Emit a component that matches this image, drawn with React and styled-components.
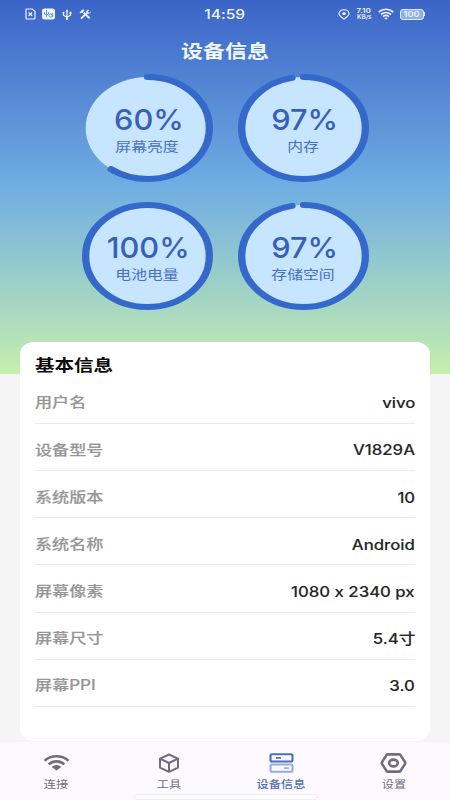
import React from 'react';
import styled, { createGlobalStyle } from 'styled-components';

const royal = '#3568cb';
const ice = '#c8e5ff';
const slate = '#6f6d7c';
const wide = 1.22;

const GlobalStyle = createGlobalStyle`
	* {
		box-sizing: border-box;
	}

	body {
		margin: 0;
		background: #f5f5f5;
		font-family: Inter, "Noto Sans CJK SC", sans-serif;
		font-feature-settings: "calt" 0;
	}
`;

const Screen = styled.div`
	display: flex;
	flex-direction: column;

	width: 450px;
	height: 800px;
	overflow: hidden;

	background: linear-gradient(#3b64c8 0, #70aee2 187px, #c5efae 374px, #f5f5f5 374px);
`;

// Every label is set in extended letters
const Text = styled.span`
	display: inline-block;

	font-size: ${props => props.$size}px;
	font-weight: ${props => props.$weight || 400};
	line-height: ${props => props.$line || 1.2};
	color: ${props => props.$color};
	white-space: nowrap;
	transform: scaleX(${props => props.$stretch || wide});
	transform-origin: ${props => props.$origin || 'center'};
	-webkit-text-stroke: ${props => props.$stroke || 0}px currentColor;
`;

const StatusBar = styled.header`
	display: grid;
	grid-template-columns: 1fr auto 1fr;
	align-items: center;

	height: 29px;
	padding: 0 25px 0 25px;

	color: #eaf4ff;
`;

const StatusGroup = styled.div`
	display: flex;
	align-items: center;
	justify-content: ${props => props.$end ? 'flex-end' : 'flex-start'};
	gap: 6px;

	svg {
		display: block;
	}
`;

const Speed = styled.div`
	display: flex;
	flex-direction: column;
	align-items: center;
	gap: 1px;

	width: 15px;
	margin-left: 1px;
`;

const Battery = styled.div`
	display: flex;
	align-items: center;

	&::after {
		content: '';
		width: 1.5px;
		height: 4px;
		background: #dcebff;
	}
`;

const BatteryBody = styled.div`
	display: flex;
	align-items: center;
	justify-content: center;

	width: 24px;
	height: 11px;

	border: 1px solid #dcebff;
	border-radius: 3px;
	background: #8fafe4;
`;

const Title = styled.h1`
	display: flex;
	justify-content: center;

	height: 45px;
	margin: 0;
	padding-top: 12px;
`;

const Gauges = styled.section`
	display: grid;
	grid-template-columns: repeat(2, 131px);
	justify-content: center;
	gap: 20px 25px;

	margin-bottom: 32px;
`;

const GaugeBox = styled.div`
	display: grid;
	place-items: center;

	height: 108px;

	> * {
		grid-area: 1 / 1;
	}
`;

const GaugeText = styled.div`
	display: flex;
	flex-direction: column;
	align-items: center;

	padding: 2px 0 0 1px;
`;

const GaugeValue = styled(Text)`
	padding-left: 2px;
`;

const Card = styled.section`
	height: 400.5px;
	margin: 0 20px;
	padding: 14px 15px 0;

	border-radius: 14px / 12px;
	background: #fff;
`;

const CardTitle = styled.h2`
	display: flex;
	align-items: flex-start;

	height: 21px;
	margin: 0;
`;

const Row = styled.div`
	display: flex;
	align-items: center;
	justify-content: space-between;

	height: 47.17px;
	padding-top: 6px;

	border-bottom: 1px solid #ebebeb;
`;

const TabBar = styled.nav`
	display: grid;
	grid-template-columns: repeat(4, 1fr);

	height: 53px;

	border-top: 1px solid #f4f2f5;
	background: #fdfaff;
`;

const Tab = styled.div`
	display: flex;
	flex-direction: column;
	align-items: center;
	gap: 4px;

	padding-top: 11px;

	svg {
		display: block;
	}
`;

const HomeIndicator = styled.div`
	flex: 1;

	padding-left: 134px;
	background: #fdfaff;

	&::before {
		content: '';
		display: block;
		width: 182px;
		height: 4px;
		border: 1px solid #efedf0;
		border-radius: 3px;
		background: #fff;
	}
`;

const UsbPaths = () => (
	<g fill="none" stroke="currentColor" strokeWidth="1.3">
		<path d="M6 1.5v8.5M2.5 4v2.2L6 8.2l3.5-2V4" />
		<path d="M6 .2 7.600 2.6H4.400Z" fill="currentColor" stroke="none" />
		<circle cx="2.5" cy="3.8" r="1.1" fill="currentColor" stroke="none" />
		<path d="M8.5 2.8h2v2h-2z" fill="currentColor" stroke="none" />
		<circle cx="6" cy="9.7" r="1.2" fill="currentColor" stroke="none" />
	</g>
);

const SimIcon = () => (
	<svg width="11" height="12" viewBox="0 0 11 12" fill="none" stroke="currentColor">
		<path d="M2 1h5.2L10 3.4V10a1 1 0 0 1-1 1H2a1 1 0 0 1-1-1V2a1 1 0 0 1 1-1Z" strokeWidth="1.2" />
		<path d="m3.6 4.6 3.6 3.2M7.2 4.6 3.6 7.8" strokeWidth="1.3" />
	</svg>
);

const UsbBadge = () => (
	<svg width="13" height="12" viewBox="0 0 13 12">
		<rect y=".5" width="13" height="11" rx="2.5" fill="#eef6ff" />
		<g fill="none" stroke="#6b8fd8" strokeWidth="1">
			<path d="M4.5 2v7M2.4 4v2l2.1 1.3L6.6 6V4" />
			<circle cx="8.6" cy="7.4" r="1.6" />
			<path d="M10.7 5v4" />
		</g>
	</svg>
);

const UsbIcon = () => (
	<svg width="12" height="11" viewBox="0 0 12 11"><UsbPaths /></svg>
);

const ToolsIcon = () => (
	<svg width="13" height="11" viewBox="0 0 12 11" fill="none" stroke="currentColor">
		<path d="m2 1.8 1.7 1.5M4.2 3.8l6 5.4" strokeWidth="1.9" />
		<path d="M1.400 9.600 7.200 4.3" strokeWidth="1.9" />
		<path d="M11.600 2.3 9.800 3.9 8.200 2.500 9.800.9C7.8.5 6.300 1.900 6.700 3.9c1.200 1.700 4.700 1 4.900-1.6Z" fill="currentColor" stroke="none" />
		<path d="M0 3.200 3.400.3 5.100.9 1.200 4.500Z" fill="currentColor" stroke="none" />
	</svg>
);

const PinIcon = () => (
	<svg width="12" height="11" viewBox="0 0 11 11" preserveAspectRatio="none" fill="none" stroke="currentColor">
		<path d="M5.5 10C3.9 9 .9 7.200.9 4.600.9 2.400 2.900.8 5.500.8s4.600 1.600 4.600 3.800C10.100 7.200 7.100 9 5.500 10Z" strokeWidth="1.1" />
		<ellipse cx="5.500" cy="4.700" rx="1.700" ry="1.400" fill="currentColor" stroke="none" />
	</svg>
);

const StatusWifi = () => (
	<svg width="16" height="12" viewBox="0 0 16 12" fill="none" stroke="currentColor" strokeWidth="1.700">
		<path d="M.8 4c4.100-3.700 10.300-3.700 14.400 0" />
		<path d="M3 6.500c3-2.600 7-2.600 10 0" />
		<path d="M5.100 8.700c1.800-1.500 4-1.500 5.800 0" />
		<path d="M6.200 10c1-.8 2.600-.8 3.600 0L8 11.700Z" fill="currentColor" stroke="none" />
	</svg>
);

const WifiIcon = () => (
	<svg width="27" height="20" viewBox="0 0 27 20" fill="none" stroke={slate} strokeWidth="2.600">
		<path d="M1.600 7.800C8 1.800 19 1.800 25.400 7.800" />
		<path d="M5.600 11.400c4.400-4.100 11.400-4.100 15.800 0" />
		<path d="M8.700 14c2.600-2.700 7-2.700 9.600 0l-4.800 3.400Z" fill={slate} stroke="none" />
	</svg>
);

const CubeIcon = () => (
	<svg width="22" height="20" viewBox="0 0 22 20" fill="none" stroke={slate} strokeWidth="2" strokeLinejoin="round">
		<path d="M11 1.500 20 5.700v8.900l-9 4.200-9-4.200V5.700Z" />
		<path d="m2 5.700 9 4.300 9-4.300M11 10v8.500" />
	</svg>
);

const ServerIcon = () => (
	<svg width="25" height="20" viewBox="0 0 25 20" fill="none" strokeWidth="2.100">
		<rect x="1.500" y="1.300" width="22" height="7.200" rx="1.500" stroke="#4a6fb5" />
		<rect x="1.500" y="11.500" width="22" height="7.200" rx="1.500" stroke="#94aee3" />
		<path d="M7 4.900h5" stroke="#4a6fb5" strokeWidth="1.700" />
		<path d="M15 15.100h5" stroke="#94aee3" strokeWidth="1.700" />
	</svg>
);

const SettingsIcon = () => (
	<svg width="27" height="20" viewBox="0 0 27 20" fill="none" stroke={slate} strokeWidth="2.600" strokeLinejoin="round">
		<path d="M8 1.400h11q1 0 1.500.7l4.500 7q.5.900 0 1.800l-4.500 7q-.5.700-1.500.7H8q-1 0-1.500-.7L2 10.900Q1.500 10 2 9.100l4.500-7Q7 1.400 8 1.400Z" />
		<ellipse cx="13.500" cy="10" rx="4.300" ry="3.400" />
	</svg>
);

const Gauge = ({ value, label }) => (
	<GaugeBox>
		<svg width="131" height="108" viewBox="0 0 108 108" preserveAspectRatio="none">
			<circle cx="54" cy="54" r="51" fill={ice} />
			<circle
				cx="54"
				cy="54"
				r="51"
				fill="none"
				stroke={royal}
				strokeWidth="6"
				strokeLinecap="round"
				pathLength="100"
				strokeDasharray={value === 100 ? 'none' : `${value} 100`}
				transform="rotate(-90 54 54)"
			/>
		</svg>
		<GaugeText>
			<GaugeValue $size={29} $weight={500} $color="#3661b8" $stretch={1.06}>{value}%</GaugeValue>
			<Text $size={13} $color="#4770bd" $line={1.3}>{label}</Text>
		</GaugeText>
	</GaugeBox>
);

const gauges = [
	{ value: 60, label: '屏幕亮度' },
	{ value: 97, label: '内存' },
	{ value: 100, label: '电池电量' },
	{ value: 97, label: '存储空间' },
];

const rows = [
	['用户名', 'vivo'],
	['设备型号', 'V1829A'],
	['系统版本', '10'],
	['系统名称', 'Android'],
	['屏幕像素', '1080 x 2340 px'],
	['屏幕尺寸', '5.4寸'],
	['屏幕PPI', '3.0'],
];

const tabs = [
	{ label: '连接', icon: <WifiIcon /> },
	{ label: '工具', icon: <CubeIcon /> },
	{ label: '设备信息', icon: <ServerIcon />, active: true },
	{ label: '设置', icon: <SettingsIcon /> },
];

export default function App() {
	return (
		<Screen>
			<GlobalStyle />
			<StatusBar>
				<StatusGroup>
					<SimIcon />
					<UsbBadge />
					<UsbIcon />
					<ToolsIcon />
				</StatusGroup>
				<Text $size={13.5} $weight={500} $stretch={1.15}>14:59</Text>
				<StatusGroup $end>
					<PinIcon />
					<Speed>
						<Text $size={6.5} $weight={600} $line={1} $stretch={1.25}>7.10</Text>
						<Text $size={5.5} $weight={600} $line={1} $stretch={1.15}>KB/s</Text>
					</Speed>
					<StatusWifi />
					<Battery>
						<BatteryBody>
							<Text $size={7.5} $weight={600} $line={1}>100</Text>
						</BatteryBody>
					</Battery>
				</StatusGroup>
			</StatusBar>
			<Title>
				<Text $size={18} $weight={700} $color="#f1f8ff">设备信息</Text>
			</Title>
			<Gauges>
				{gauges.map(gauge => <Gauge key={gauge.label} {...gauge} />)}
			</Gauges>
			<Card>
				<CardTitle>
					<Text $size={16} $weight={700} $color="#0c0c0c" $origin="left">基本信息</Text>
				</CardTitle>
				{rows.map(([name, value]) => (
					<Row key={name}>
						<Text $size={14} $weight={500} $color="#969696" $origin="left" $stroke={0.15}>{name}</Text>
						<Text $size={14.3} $weight={500} $color="#262626" $origin="right" $stretch={1.17} $stroke={0.1}>{value}</Text>
					</Row>
				))}
			</Card>
			<TabBar>
				{tabs.map(tab => (
					<Tab key={tab.label}>
						{tab.icon}
						<Text $size={10} $weight={tab.active ? 500 : 400} $color={tab.active ? '#4a6eb5' : slate} $line={1.4}>{tab.label}</Text>
					</Tab>
				))}
			</TabBar>
			<HomeIndicator />
		</Screen>
	);
}
